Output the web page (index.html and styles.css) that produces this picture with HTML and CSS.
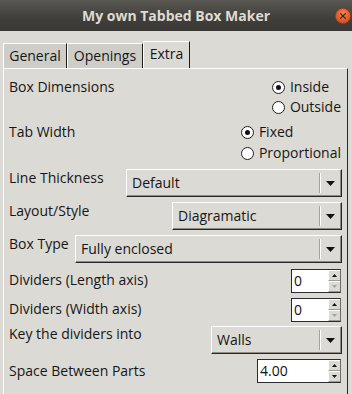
FILE: index.html
```html
<!DOCTYPE html>
<html>
<head>
<meta charset="utf-8">
<link rel="stylesheet" href="styles.css">
</head>
<body>
<div class="titlebar">
  <span class="title">My own Tabbed Box Maker</span>
  <svg class="close" width="16" height="16" viewBox="0 0 16 16">
    <defs>
      <radialGradient id="cg" cx="50%" cy="35%" r="65%">
        <stop offset="0" stop-color="#f4854f"/>
        <stop offset="1" stop-color="#d9461a"/>
      </radialGradient>
    </defs>
    <circle cx="8" cy="8" r="7.6" fill="url(#cg)" stroke="#9c3a14" stroke-width="0.6"/>
    <path d="M5.6 5.6 L10.4 10.4 M10.4 5.6 L5.6 10.4" stroke="#3a2a22" stroke-width="1.3" stroke-linecap="round"/>
  </svg>
</div>
<div class="tabs">
  <div class="tab tab-general">General</div>
  <div class="tab tab-openings">Openings</div>
  <div class="tab tab-extra active">Extra</div>
</div>
<div class="panel">
  <div class="row row-a">
    <span class="label">Box Dimensions</span>
    <div class="radios radios-a">
      <div class="radio"><span class="dot on"></span>Inside</div>
      <div class="radio"><span class="dot"></span>Outside</div>
    </div>
  </div>
  <div class="row row-b">
    <span class="label">Tab Width</span>
    <div class="radios">
      <div class="radio"><span class="dot on"></span>Fixed</div>
      <div class="radio"><span class="dot"></span>Proportional</div>
    </div>
  </div>
  <div class="row row-c">
    <span class="label">Line Thickness</span>
    <div class="combo combo-c">
      <span class="combo-text">Default</span><span class="combo-sep"></span><span class="combo-arrow"><svg width="9" height="5" viewBox="0 0 9 5"><path d="M0 0H9L4.5 5Z" fill="#111"/></svg></span>
    </div>
  </div>
  <div class="row row-d">
    <span class="label">Layout/Style</span>
    <div class="combo combo-d">
      <span class="combo-text">Diagramatic</span><span class="combo-sep"></span><span class="combo-arrow"><svg width="9" height="5" viewBox="0 0 9 5"><path d="M0 0H9L4.5 5Z" fill="#111"/></svg></span>
    </div>
  </div>
  <div class="row row-e">
    <span class="label">Box Type</span>
    <div class="combo combo-e">
      <span class="combo-text">Fully enclosed</span><span class="combo-sep"></span><span class="combo-arrow"><svg width="9" height="5" viewBox="0 0 9 5"><path d="M0 0H9L4.5 5Z" fill="#111"/></svg></span>
    </div>
  </div>
  <div class="row row-f">
    <span class="label">Dividers (Length axis)</span>
    <div class="spin spin-small">
      <span class="spin-entry">0</span>
      <span class="spin-btns">
        <span class="spin-btn"><svg width="5" height="3" viewBox="0 0 5 3"><path d="M0 3H5L2.5 0Z" fill="#111"/></svg></span>
        <span class="spin-btn"><svg width="5" height="3" viewBox="0 0 5 3"><path d="M0 0H5L2.5 3Z" fill="#a6a39c"/></svg></span>
      </span>
    </div>
  </div>
  <div class="row row-g">
    <span class="label">Dividers (Width axis)</span>
    <div class="spin spin-small">
      <span class="spin-entry">0</span>
      <span class="spin-btns">
        <span class="spin-btn"><svg width="5" height="3" viewBox="0 0 5 3"><path d="M0 3H5L2.5 0Z" fill="#111"/></svg></span>
        <span class="spin-btn"><svg width="5" height="3" viewBox="0 0 5 3"><path d="M0 0H5L2.5 3Z" fill="#a6a39c"/></svg></span>
      </span>
    </div>
  </div>
  <div class="row row-h">
    <span class="label">Key the dividers into</span>
    <div class="combo combo-h">
      <span class="combo-text">Walls</span><span class="combo-sep"></span><span class="combo-arrow"><svg width="9" height="5" viewBox="0 0 9 5"><path d="M0 0H9L4.5 5Z" fill="#111"/></svg></span>
    </div>
  </div>
  <div class="row row-i">
    <span class="label">Space Between Parts</span>
    <div class="spin spin-wide">
      <span class="spin-entry">4.00</span>
      <span class="spin-btns">
        <span class="spin-btn"><svg width="5" height="3" viewBox="0 0 5 3"><path d="M0 3H5L2.5 0Z" fill="#111"/></svg></span>
        <span class="spin-btn"><svg width="5" height="3" viewBox="0 0 5 3"><path d="M0 0H5L2.5 3Z" fill="#111"/></svg></span>
      </span>
    </div>
  </div>
</div>
</body>
</html>
```

FILE: styles.css
```css
* { box-sizing: border-box; }
html, body { margin: 0; padding: 0; }
body {
  width: 352px;
  height: 394px;
  overflow: hidden;
  background: #dcdad5;
  font-family: "Open Sans", "Noto Sans", sans-serif;
  font-size: 14px;
  color: #161616;
}
.titlebar {
  height: 31px;
  background: linear-gradient(#5a5853, #3f3e3a 60%, #3a3935);
  display: flex;
  align-items: center;
  justify-content: center;
  position: relative;
}
.title {
  color: #dfdbd2;
  font-weight: bold;
  font-size: 14px;
}
.close {
  position: absolute;
  right: 1px;
  top: 8px;
}
.tabs {
  display: flex;
  align-items: flex-end;
  height: 27px;
  margin: 10px 0 0 3px;
}
.tab {
  height: 25px;
  border-top: 1px solid #ffffff;
  border-left: 1px solid #ffffff;
  border-right: 1px solid #1c1c1c;
  background: #cfcdc8;
  text-align: center;
  line-height: 22px;
  padding-top: 1px;
}
.tab.active {
  height: 27px;
  background: #dcdad5;
  line-height: 22px;
  padding-top: 1px;
}
.tab-general { width: 64px; }
.tab-openings { width: 76px; }
.tab-extra { width: 47px; }
.panel {
  margin-left: 3px;
  width: 345px;
  height: 326px;
  border-top: 1px solid #ffffff;
  border-left: 1px solid #ffffff;
  border-right: 1px solid #2a2a2a;
  padding: 8px 5px 0 5px;
}
.row {
  display: flex;
  justify-content: space-between;
  align-items: flex-start;
}
.label {
  line-height: 20px;
  white-space: nowrap;
}
.radios {
  display: flex;
  flex-direction: column;
  margin-right: 1px;
}
.radio {
  display: flex;
  align-items: center;
  height: 20px;
  line-height: 20px;
  white-space: nowrap;
}
.dot {
  width: 13px;
  height: 13px;
  border-radius: 50%;
  border: 1.5px solid #1e1e1e;
  background: #ffffff;
  margin-right: 5px;
  display: flex;
  align-items: center;
  justify-content: center;
}
.dot.on::after {
  content: "";
  width: 5px;
  height: 5px;
  border-radius: 50%;
  background: #111;
}
.row-a { height: 40px; }
.row-b { height: 41px; margin-top: 5px; }
.row-b .radio + .radio { margin-top: 1px; }
.row-c { height: 29px; margin-top: 5px; }
.row-d { height: 29px; margin-top: 4px; }
.row-e { height: 30px; margin-top: 3px; }
.row-f { height: 24px; margin-top: 6px; }
.row-g { height: 24px; margin-top: 5px; }
.row-h { height: 30px; margin-top: 2px; }
.row-i { height: 24px; margin-top: 5px; }
.row-c .combo, .row-d .combo { margin-top: 1px; }
.row-e .combo, .row-h .combo { margin-top: 2px; }
.row-e .label, .row-f .label, .row-g .label { margin-top: 1px; }
.row-i .label { margin-top: 2px; }
.combo {
  height: 28px;
  display: flex;
  align-items: stretch;
  background: #dcdad5;
  border-top: 1px solid #ffffff;
  border-left: 1px solid #ffffff;
  border-right: 1px solid #262626;
  border-bottom: 1px solid #262626;
  box-shadow: inset -1px -1px 0 #8f8b83;
}
.combo-c { width: 216px; }
.combo-d { width: 170px; }
.combo-e { width: 267px; }
.combo-h { width: 131px; }
.combo-text {
  flex: 1;
  padding-left: 5px;
  line-height: 20px;
  padding-top: 3px;
  white-space: nowrap;
}
.combo-sep {
  width: 2px;
  margin: 3px 0 3px 0;
  border-left: 1px solid #a7a39b;
  border-right: 1px solid #ffffff;
}
.combo-arrow {
  width: 20px;
  display: flex;
  align-items: center;
  justify-content: center;
  padding-right: 1px;
}
.spin {
  height: 24px;
  display: flex;
  margin-right: 1px;
  border-top: 1px solid #2b2b2b;
  border-left: 1px solid #2b2b2b;
  border-bottom: 1px solid #2b2b2b;
  border-right: 1px solid #6f6c66;
}
.spin-small { width: 50px; }
.spin-wide { width: 84px; }
.spin-entry {
  flex: 1;
  background: #ffffff;
  line-height: 22px;
  padding-left: 2px;
  color: #111;
}
.spin-btns {
  width: 12px;
  display: flex;
  flex-direction: column;
}
.spin-btn {
  flex: 1;
  display: flex;
  align-items: center;
  justify-content: center;
  background: #dcdad5;
  border-top: 1px solid #ffffff;
  border-left: 1px solid #ffffff;
  border-bottom: 1px solid #9e9a91;
}
```
